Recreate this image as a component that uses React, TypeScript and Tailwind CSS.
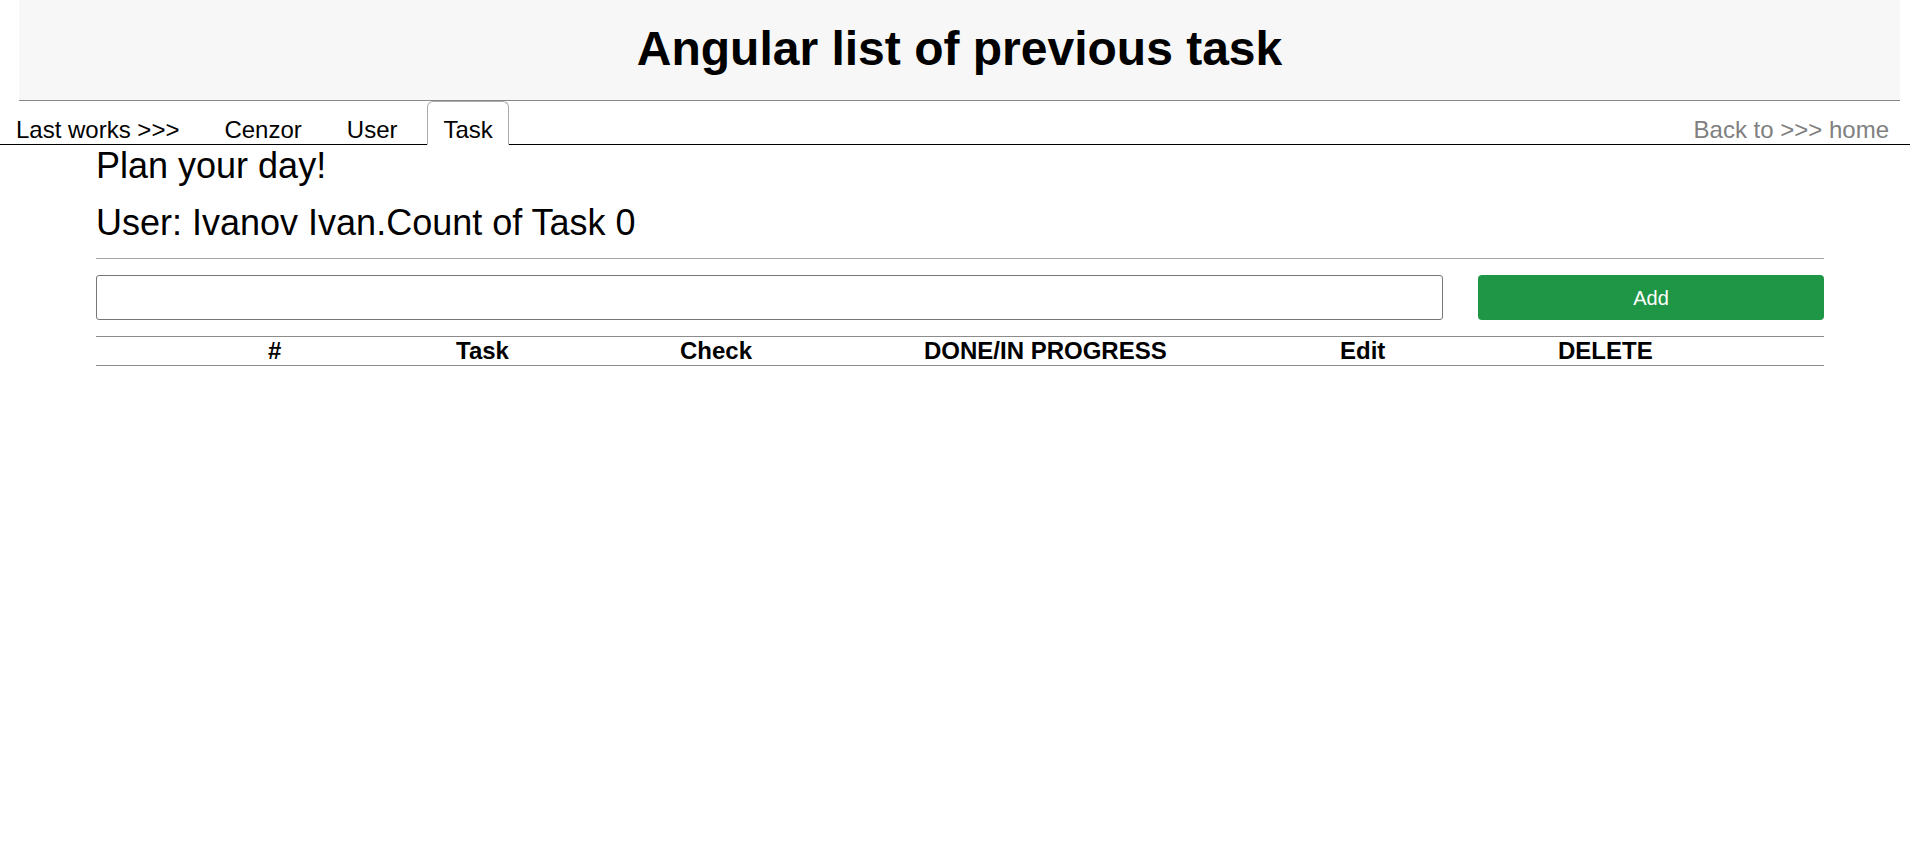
import { useState } from 'react'

const tabs = ['Last works >>>', 'Cenzor', 'User']

const columns = ['#', 'Task', 'Check', 'DONE/IN PROGRESS', 'Edit', 'DELETE']

export default function App() {
  const [task, setTask] = useState('')

  return (
    <div className="min-h-screen bg-white font-['Liberation_Sans',Arial,sans-serif] text-black">
      {/* Header */}
      <header className="ml-[19px] mr-[10px] h-[101px] border-b border-[#888] bg-[#f7f7f7] pt-[21px]">
        <h1 className="text-center text-[48px] font-bold leading-[55px]">Angular list of previous task</h1>
      </header>

      {/* Tabs */}
      <nav className="flex h-[44px] items-end gap-[13px] border-b border-black text-[24px] leading-[28px]">
        {tabs.map((t) => (
          <a key={t} className="cursor-pointer px-4">
            {t}
          </a>
        ))}
        <a className="-mb-px ml-px flex h-[44px] items-end rounded-t-[6px] border border-[#aaa] border-b-white bg-white px-[15px]">
          Task
        </a>
        <a className="ml-auto pr-[21px] text-[#808080]">Back to &gt;&gt;&gt; home</a>
      </nav>

      {/* Content */}
      <main className="ml-[96px] w-[1728px]">
        <p className="text-[36px] leading-[41px]">Plan your day!</p>
        <p className="mt-4 text-[36px] leading-[41px]">User: Ivanov Ivan.Count of Task 0</p>
        <hr className="mt-[15px] border-t border-[#a6a6a6]" />

        <div className="mt-4 flex gap-[35px]">
          <input
            value={task}
            onChange={(e) => setTask(e.target.value)}
            className="h-[45px] flex-1 rounded-[3px] border border-[#767676] px-2 text-[20px] outline-none"
          />
          <button className="h-[45px] w-[346px] rounded-[4px] bg-[#1e9645] text-[20px] text-white">Add</button>
        </div>

        <div className="mt-4 grid grid-cols-[188px_224px_244px_416px_218px_1fr] border-y border-[#8c8c8c] pl-[172px] text-[24px] font-bold leading-[28px]">
          {columns.map((c) => (
            <div key={c}>{c}</div>
          ))}
        </div>
      </main>
    </div>
  )
}
